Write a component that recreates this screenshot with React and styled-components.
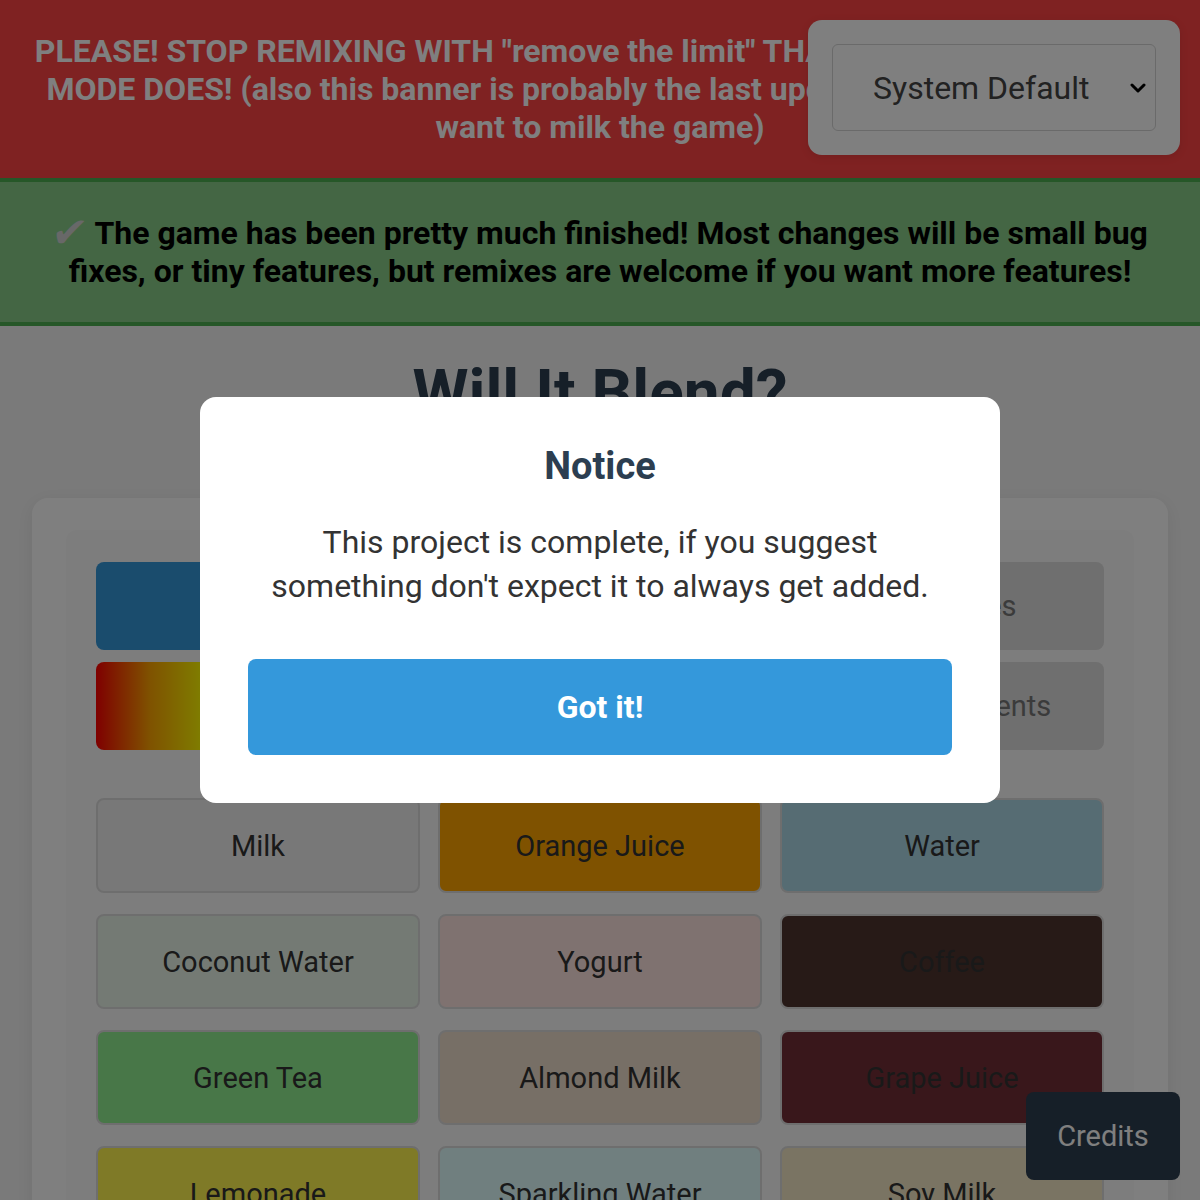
import styled, { createGlobalStyle } from "styled-components";

const GlobalStyle = createGlobalStyle`
  body {
    margin: 0;
    background: #f5f5f5;
    font-family: Roboto, "Liberation Sans", sans-serif;
    color: #333;
  }
  * { box-sizing: border-box; }
`;

const actions = [
  { label: "Blend!", kind: "primary" },
  { label: "Hint", kind: "muted" },
  { label: "Discoveries", kind: "muted" },
  { label: "Theme", kind: "rainbow" },
  { label: "Infinite Mode", kind: "muted" },
  { label: "Clear Ingredients", kind: "muted" },
];

const ingredients = [
  { name: "Milk", color: "#f0f0f0" },
  { name: "Orange Juice", color: "#ffa500" },
  { name: "Water", color: "#add8e6" },
  { name: "Coconut Water", color: "#e8f5e8" },
  { name: "Yogurt", color: "#ffe4e1" },
  { name: "Coffee", color: "#4e342e" },
  { name: "Green Tea", color: "#90ee90" },
  { name: "Almond Milk", color: "#efdecd" },
  { name: "Grape Juice", color: "#722f37" },
  { name: "Lemonade", color: "#fff44f" },
  { name: "Sparkling Water", color: "#e0ffff" },
  { name: "Soy Milk", color: "#f5e8c7" },
];

function App() {
  return (
    <>
      <GlobalStyle />
      <WarnBanner>
        PLEASE! STOP REMIXING WITH "remove the limit" THATS WHAT THE INFINITE
        <br />
        MODE DOES! (also this banner is probably the last update, unless I ever really
        <br />
        want to milk the game)
      </WarnBanner>

      <ThemeBox>
        <ThemeSelect defaultValue="system">
          <option value="system">System Default</option>
          <option value="light">Light</option>
          <option value="dark">Dark</option>
        </ThemeSelect>
        <Chevron viewBox="0 0 16 10">
          <polyline points="2,2 8,8 14,2" />
        </Chevron>
      </ThemeBox>

      <DoneBanner>
        <Check>✔</Check> The game has been pretty much finished! Most changes will be small bug
        <br />
        fixes, or tiny features, but remixes are welcome if you want more features!
      </DoneBanner>

      <Main>
        <Title>Will It Blend?</Title>
        <Card>
          <Inner>
            <ActionGrid>
              {actions.map((a) => (
                <ActionButton key={a.label} $kind={a.kind}>
                  {a.label}
                </ActionButton>
              ))}
            </ActionGrid>
            <IngredientGrid>
              {ingredients.map((i) => (
                <Ingredient key={i.name} $bg={i.color}>
                  {i.name}
                </Ingredient>
              ))}
            </IngredientGrid>
          </Inner>
        </Card>
      </Main>

      <CreditsButton>Credits</CreditsButton>

      <Overlay>
        <Modal>
          <ModalTitle>Notice</ModalTitle>
          <ModalText>
            This project is complete, if you suggest
            <br />
            something don't expect it to always get added.
          </ModalText>
          <GotIt>Got it!</GotIt>
        </Modal>
      </Overlay>
    </>
  );
}

const WarnBanner = styled.div`
  background: #ff4444;
  color: #fff;
  font-weight: 700;
  font-size: 32px;
  line-height: 38px;
  text-align: center;
  padding: 32px 20px;
  white-space: nowrap;
  overflow: hidden;
`;

const ThemeBox = styled.div`
  position: fixed;
  top: 20px;
  right: 20px;
  padding: 24px;
  background: #fff;
  border-radius: 14px;
  box-shadow: 0 2px 10px rgba(0, 0, 0, 0.1);
`;

const ThemeSelect = styled.select`
  display: block;
  width: 324px;
  height: 87px;
  padding: 0 40px;
  appearance: none;
  background: #fff;
  border: 1px solid #d4d4d4;
  border-radius: 6px;
  font-family: Roboto, "Liberation Sans", sans-serif;
  font-size: 32px;
  color: #444;
`;

const Chevron = styled.svg`
  position: absolute;
  right: 34px;
  top: 63px;
  width: 16px;
  height: 10px;
  fill: none;
  stroke: #000;
  stroke-width: 3;
  stroke-linecap: round;
  stroke-linejoin: round;
  pointer-events: none;
`;

const DoneBanner = styled.div`
  background: #88cc88;
  border-top: 4px solid #4caf50;
  border-bottom: 4px solid #4caf50;
  color: #000;
  font-weight: 700;
  font-size: 32px;
  line-height: 38px;
  text-align: center;
  padding: 32px 20px;
  white-space: nowrap;
`;

const Check = styled.span`
  display: inline-block;
  font-family: "DejaVu Sans", sans-serif;
  font-size: 42px;
  line-height: 38px;
  vertical-align: top;
  color: #d0d0d0;
  font-weight: 400;
  transform: skewX(-8deg);
`;

const Main = styled.main`
  padding: 29px 32px 40px;
`;

const Title = styled.h1`
  margin: 0 0 66px;
  text-align: center;
  font-size: 64px;
  line-height: 77px;
  font-weight: 700;
  color: #2c3e50;
`;

const Card = styled.section`
  background: #fff;
  border-radius: 16px;
  padding: 32px 34px;
  box-shadow: 0 4px 20px rgba(0, 0, 0, 0.08);
`;

const Inner = styled.div`
  background: #fbfbfb;
  border-radius: 10px;
  padding: 32px 30px;
`;

const ActionGrid = styled.div`
  display: grid;
  grid-template-columns: repeat(3, 1fr);
  grid-auto-rows: 88px;
  gap: 12px 18px;
`;

const ActionButton = styled.button`
  border: none;
  border-radius: 8px;
  font-family: inherit;
  font-size: 29px;
  color: ${(p) => (p.$kind === "muted" ? "#777" : "#fff")};
  background: ${(p) =>
    p.$kind === "primary"
      ? "#3498db"
      : p.$kind === "rainbow"
      ? "linear-gradient(to right, red, orange, yellow, green, blue, indigo, violet)"
      : "#dedede"};
`;

const IngredientGrid = styled.div`
  display: grid;
  grid-template-columns: repeat(3, 1fr);
  grid-auto-rows: 95px;
  gap: 21px 18px;
  margin-top: 48px;
`;

const Ingredient = styled.button`
  border: 2px solid #ddd;
  border-radius: 8px;
  background: ${(p) => p.$bg};
  font-family: inherit;
  font-size: 29px;
  color: #333;
`;

const CreditsButton = styled.button`
  position: fixed;
  right: 20px;
  bottom: 20px;
  width: 154px;
  height: 88px;
  border: none;
  border-radius: 8px;
  background: #2c3e50;
  color: #fff;
  font-family: inherit;
  font-size: 29px;
`;

const Overlay = styled.div`
  position: fixed;
  inset: 0;
  background: rgba(0, 0, 0, 0.5);
  display: flex;
  align-items: center;
  justify-content: center;
`;

const Modal = styled.div`
  width: 800px;
  background: #fff;
  border-radius: 16px;
  padding: 48px;
  text-align: center;
`;

const ModalTitle = styled.h2`
  margin: 0 0 32px;
  font-size: 38px;
  line-height: 43px;
  font-weight: 700;
  color: #2c3e50;
`;

const ModalText = styled.p`
  margin: 0 0 51px;
  font-size: 32px;
  line-height: 44px;
  color: #333;
`;

const GotIt = styled.button`
  display: block;
  width: 100%;
  height: 96px;
  border: none;
  border-radius: 8px;
  background: #3498db;
  color: #fff;
  font-family: inherit;
  font-size: 32px;
  font-weight: 700;
`;

export default App;
